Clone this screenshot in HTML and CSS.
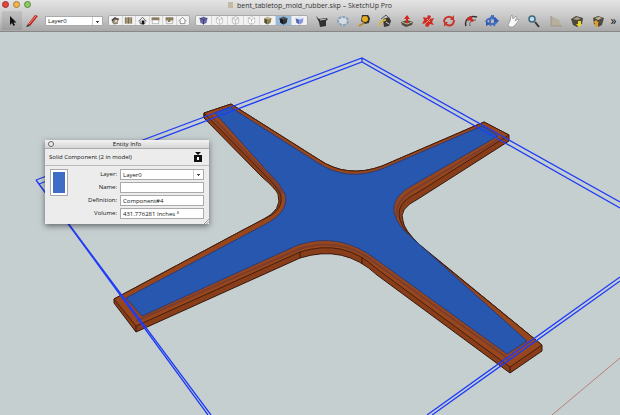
FILE: index.html
```
<!DOCTYPE html>
<html lang="en">
<head>
    <meta charset="UTF-8">
    <title>bent_tabletop_mold_rubber.skp – SketchUp Pro</title>
    <link rel="stylesheet" href="styles.css">
</head>
<body>
<header class="window-header">
    <div class="title-bar">
        <div class="window-buttons">
            <button class="light close" aria-label="Close"></button>
            <button class="light minimize" aria-label="Minimize"></button>
            <button class="light zoom" aria-label="Zoom"></button>
        </div>
        <h1><span class="file-icon"></span>bent_tabletop_mold_rubber.skp – SketchUp Pro</h1>
    </div>
    <div class="toolbar">
        <button class="tool selected" aria-label="Select"><svg viewBox="0 0 14 14"><path d="M5 2v9l2-2 1.500 3 1.500-1-1.500-2.500h3z" fill="#111"/></svg></button>
        <button class="tool" aria-label="Line"><svg viewBox="0 0 14 14"><path d="M3 10l7-9 3 1-8 10z" fill="#c3241c"/><path d="M4 10l7-8" stroke="#e88a80"/><path d="M1 13l2-3 2 2z" fill="#333"/></svg></button>
        <select class="layer-select" aria-label="Active layer"><option>Layer0</option></select>
        <div class="tool-group views">
            <button aria-label="Iso"><svg viewBox="0 0 14 14"><path d="M2 6l4-3 6 2-2 3v3l-5 1-2-2z" fill="#8b8272"/><path d="M2 6l4-3 6 2-3 1-3-1-3 3z" fill="#4b463e"/><path d="M6 7l3-1v3l-3 1z" fill="#e5dcc4"/></svg></button>
            <button aria-label="Top"><svg viewBox="0 0 14 14"><path d="M3 3h8v8H3z" fill="#a39476"/><path d="M7 3v8M3 3v8M11 3v8" stroke="#6d6048"/></svg></button>
            <button aria-label="Front"><svg viewBox="0 0 14 14"><path d="M2 8l5-5 5 5M4 7v4h6V7" fill="#eee" stroke="#444"/><path d="M6 7h3v5H6z" fill="#111"/></svg></button>
            <button aria-label="Right"><svg viewBox="0 0 14 14"><path d="M2 3h10v4H2z" fill="#8b7c60"/><path d="M3 7v4h8V7" fill="#fff" stroke="#aaa"/></svg></button>
            <button aria-label="Back"><svg viewBox="0 0 14 14"><path d="M2 3h10v4H8v2H5V7H2z" fill="#8b7c60"/><path d="M3 7v4h8V7" fill="none" stroke="#aaa"/></svg></button>
            <button aria-label="Left"><svg viewBox="0 0 14 14"><path d="M2 8l5-5 5 5M4 7v4h6V7" fill="#fff" stroke="#777"/></svg></button>
        </div>
        <div class="tool-group face-styles">
            <button aria-label="X-Ray"><svg viewBox="0 0 14 14"><path d="M2 4l5-2 5 2-1 6-4 2-4-2z" fill="#6b6ba7"/><path d="M2 4l5 2 5-2M7 6v6" fill="none" stroke="#34346c"/></svg></button>
            <button aria-label="Back Edges"><svg viewBox="0 0 14 14"><path d="M3 4l4-2 4 2v6l-4 2-4-2zl4 2 4-2M7 6v6" fill="#f5f5f5" stroke="#aaa" stroke-dasharray="2 1"/></svg></button>
            <button aria-label="Wireframe"><svg viewBox="0 0 14 14"><path d="M3 4l4-2 4 2v6l-4 2-4-2zl4 2 4-2M7 6v6" fill="none" stroke="#b5b5b5"/></svg></button>
            <button aria-label="Hidden Line"><svg viewBox="0 0 14 14"><path d="M3 4l4-2 4 2v6l-4 2-4-2zl4 2 4-2M7 6v6" fill="#fff" stroke="#aaa" stroke-dasharray="3 1"/></svg></button>
            <button aria-label="Shaded"><svg viewBox="0 0 14 14"><path d="M3 4l4-2 5 2-1 6-4 2-4-2z" fill="#c2b78b"/><path d="M3 4l4 2v6l-4-2z" fill="#55503e"/><path d="M7 6l5-2-1 6-4 2z" fill="#8f8150"/></svg></button>
            <button class="active" aria-label="Shaded With Textures"><svg viewBox="0 0 14 14"><path d="M2 4l5-2 5 2-1 6-4 2-4-2z" fill="#555"/><path d="M2 4l5 2v6l-4-2z" fill="#171b20"/><path d="M7 6l5-2-1 6-4 2z" fill="#2f353a"/></svg></button>
            <button aria-label="Monochrome"><svg viewBox="0 0 14 14"><path d="M2 4l5-2 5 2-1 6-4 2-4-2z" fill="#dfe4ff"/><path d="M2 4l5 2v6l-4-2z" fill="#5966b4"/><path d="M7 6l5-2-1 6-4 2z" fill="#8895dd"/></svg></button>
        </div>
        <div class="tools">
            <button class="tool" aria-label="Eraser"><svg viewBox="0 0 14 14"><path d="M1 2l3 3 7-1 2 1-2 2v5l-6 1-1-5z" fill="#303030"/><path d="M5 6l6-1" stroke="#ccc"/></svg></button>
            <button class="tool" aria-label="Circle"><svg viewBox="0 0 14 14"><ellipse cx="7" cy="7" rx="5" ry="4" fill="#d5dce2" stroke="#86a3bb" stroke-width="2" stroke-dasharray="3 1"/></svg></button>
            <button class="tool" aria-label="Tape Measure"><svg viewBox="0 0 14 14"><path d="M5 1h6l2 3-1 5-4 1-4-3z" fill="#37342e"/><circle cx="8" cy="5" r="3" fill="#e4ae20"/><path d="M7 9l-5 3" stroke="#b88a24" stroke-width="2"/></svg></button>
            <button class="tool" aria-label="Paint Bucket"><svg viewBox="0 0 14 14"><path d="M5 5l6-2 2 4-2 5-5 1z" fill="#3c3933"/><path d="M2 12c0-4 1-6 6-6" fill="none" stroke="#d8b538" stroke-width="2"/><path d="M3 5l5-4 3 3" fill="none" stroke="#555"/><path d="M8 8l3 2" stroke="#ddd"/></svg></button>
            <button class="tool" aria-label="Push/Pull"><svg viewBox="0 0 14 14"><path d="M1 8l6-2 6 2-1 3-6 2-4-2z" fill="#554b3e"/><path d="M2 8l5 2 5-2" fill="none" stroke="#c8b99b"/><path d="M7 1l3 4H8v4H6V5H4z" fill="#d8231d"/></svg></button>
            <button class="tool" aria-label="Move"><svg viewBox="0 0 14 14"><path d="M2 3l4 1 1-3 3 1-1 3 4-1-2 4 2 3-4-1-2 3-3-1 1-3-4 1 2-4z" fill="#cf2c24"/><path d="M6 5l3 3M9 5L5 9" stroke="#f1a29b"/></svg></button>
            <button class="tool" aria-label="Rotate"><svg viewBox="0 0 14 14"><path d="M2 8c0-5 6-7 9-3M12 6c0 6-6 7-9 3" fill="none" stroke="#c9342c" stroke-width="2"/><path d="M12 1v5H8zM2 13V8h4z" fill="#c9342c"/></svg></button>
            <button class="tool" aria-label="Offset"><svg viewBox="0 0 14 14"><path d="M2 12c-2-6 3-11 11-9" fill="none" stroke="#333" stroke-width="1.500"/><path d="M6 12c-1-4 1-6 6-6" fill="none" stroke="#555"/><path d="M3 4l5-2v2l2 3-2 1-3-2-1 2z" fill="#d12a22"/></svg></button>
            <button class="tool" aria-label="Orbit"><svg viewBox="0 0 14 14"><path d="M1 8c1-4 7-5 11-2M13 6c-1 4-7 5-11 3M6 2c4 0 5 6 3 10M9 2C5 2 4 8 6 12" fill="none" stroke="#456dc0" stroke-width="2"/><path d="M10 3l3 4-4 1zM1 7l4 3-4 2z" fill="#3157a8"/></svg></button>
            <button class="tool" aria-label="Pan"><svg viewBox="0 0 14 14"><path d="M2 11l2-4 1-5 1-1 1 4 3-3 1 1-2 4 3-2 1 1-3 4-3 3H4z" fill="#fafafa" stroke="#888" stroke-width=".7"/></svg></button>
            <button class="tool" aria-label="Zoom"><svg viewBox="0 0 14 14"><path d="M8 8l4 5" stroke="#363636" stroke-width="2"/><circle cx="5" cy="5" r="3" fill="#b8dfed" stroke="#40677d" stroke-width="1.500"/></svg></button>
            <button class="tool" aria-label="Zoom Extents"><svg viewBox="0 0 14 14"><path d="M2 2l8 4 3 6H2z" fill="#b6b09d"/><path d="M2 2v10h11" fill="none" stroke="#9a9588"/></svg></button>
            <button class="tool" aria-label="Get Models"><svg viewBox="0 0 14 14"><path d="M1 5l5-3 7 2-1 6-5 3-4-2z" fill="#4c493c"/><path d="M3 5l4-2 4 2-4 1z" fill="#aaa184"/><path d="M8 7h3v3h1l-3 3-3-3h2z" fill="#eed52c"/></svg></button>
            <button class="tool" aria-label="Share Model"><svg viewBox="0 0 14 14"><path d="M2 4l5-2 6 2-2 7-4 2-4-3z" fill="#504b40"/><path d="M4 4l4-1 3 1-4 2z" fill="#c8b98f"/><path d="M5 6l3 3H7v4H4V9H2z" fill="#dda02b"/></svg></button>
        </div>
        <button class="more" aria-label="More tools">»</button>
    </div>
</header>

<main class="workspace">
    <svg class="model" viewBox="0 32 620 383" preserveAspectRatio="xMidYMid slice">
        <path class="axis" d="M552 415L620 358"/>
        <!-- sides of the mold -->
        <path class="side" d="M204 113L231 104L318 159Q347 179 382 166L484 122L509 135V141L418 199Q398 209 403 221Q404 230 420 245L542 345V351L510 373L377 275Q344 244 300 258L136 332L114 303V299L243 230L262 220Q283 210 278 194Q275 188 262 177L204 118Z"/>
        <!-- top rim -->
        <path class="rim" d="M204 113L231 104L318 159Q347 179 382 166L484 122L509 135L417 193Q395 203 400 220Q403 230 418 244L542 345L510 367L377 269Q344 238 300 252L136 326L114 299L243 230L262 220Q286 210 280 193Q277 187 264 174Z"/>
        <path class="groove" d="M210 115L267 174Q280 187 282 194M136 321L299 249Q342 235 378 265L510 360M504 136L417 188Q394 200 397 217"/>
        <path class="rubber" d="M215 113L230 107L318 163Q347 182 382 169L482 126L498 136L415 184Q391 196 394 213Q398 226 410 236L527 341L507 354L377 260Q340 231 298 245L142 316L126 298L264 225Q290 212 285 194Q280 183 269 173Z"/>
        <path class="edge" d="M136 326V332M510 367V373M300 252V258M362 257V264M204 113V118"/>
        <path class="bounds" d="M36 180L362 58L620 202M39 184L362 62L620 208M36 180L208 415M39 184L211 415M362 58V62M36 180L39 184M620 277L427 415M620 281L432 415"/>
    </svg>

    <section class="entity-info">
        <div class="panel-title">
            <button class="panel-close" aria-label="Close panel"></button>
            <h2>Entity Info</h2>
        </div>
        <div class="panel-summary">
            <span>Solid Component (2 in model)</span>
            <button class="toggle" aria-label="Toggle details"><svg viewBox="0 0 8 10"><path d="M1 0h6L4 3z" fill="#111"/><path d="M0 3h8v7H0z" fill="#111"/><path d="M3 5h2v3H3z" fill="#fff"/></svg></button>
        </div>
        <div class="panel-body">
            <button class="swatch" aria-label="Material"><span></span></button>
            <form class="fields">
                <label for="layer">Layer:</label>
                <select id="layer"><option>Layer0</option></select>
                <label for="name">Name:</label>
                <input id="name" type="text">
                <label for="definition">Definition:</label>
                <input id="definition" type="text" value="Component#4">
                <label for="volume">Volume:</label>
                <input id="volume" type="text" value="431.776281 Inches ³" readonly>
            </form>
        </div>
        <svg class="grip" viewBox="0 0 6 6"><path d="M0 6L6 0M3 6L6 3" stroke="#888"/></svg>
    </section>
</main>
</body>
</html>
```
FILE: styles.css
```
* {
    box-sizing: border-box;
}

body {
    margin: 0;
    height: 100vh;
    display: flex;
    flex-direction: column;
    overflow: hidden;
    font-family: "Open Sans", "Noto Sans", sans-serif;
    font-size: 6px;
    color: #111;
}

button {
    padding: 0;
    border: none;
    background: none;
    font: inherit;
    color: inherit;
}

svg {
    display: block;
}

h1, h2 {
    margin: 0;
    font-weight: normal;
}

.window-header {
    background: linear-gradient(#e4e4e4, #cacaca 50%, #a9a9a9);
    border-bottom: 1px solid #888;
}

.title-bar {
    position: relative;
    height: 10px;
    display: flex;
    justify-content: center;
}

.title-bar h1 {
    font-size: 7px;
    line-height: 11px;
    color: #333;
}

.file-icon {
    display: inline-block;
    width: 5px;
    height: 6px;
    margin-right: 4px;
    background-color: #c5b8a4;
}

.window-buttons {
    position: absolute;
    left: 2px;
    top: 1px;
    display: flex;
    gap: 4px;
}

.light {
    width: 7px;
    height: 7px;
    border-radius: 50%;
    border: 1px solid #777;
}

.close {
    background-color: #e6453f;
    border-color: #98322f;
}

.minimize {
    background-color: #f0b64b;
    border-color: #a67a35;
}

.zoom {
    background-color: #8dcb61;
    border-color: #58883d;
}

.toolbar {
    display: flex;
    align-items: center;
    height: 21px;
    padding: 0 2px;
}

.tool svg {
    width: 14px;
    height: 14px;
    margin: 0 auto;
}

.toolbar > .tool {
    width: 20px;
    height: 19px;
    flex: none;
}

.toolbar > .selected {
    background-color: rgba(0, 0, 0, 0.08);
}

select, input {
    appearance: none;
    margin: 0;
    min-width: 0;
    height: 11px;
    padding: 0 2px;
    border: 1px solid #aaa;
    border-radius: 0;
    background-color: #fff;
    font: inherit;
    color: #111;
}

select {
    background-image: linear-gradient(#444, #444), linear-gradient(#444, #444), linear-gradient(#ccc, #ccc);
    background-size: 3px 1px, 1px 1px, 1px 100%;
    background-position: right 3px top 4px, right 4px top 5px, right 9px top 0;
    background-repeat: no-repeat;
}

.layer-select {
    flex: none;
    width: 58px;
    height: 10px;
    margin: 0 5px 0 3px;
}

.tool-group {
    flex: none;
    display: flex;
    height: 11px;
    background-color: #f2f2f2;
    border: 1px solid #aaa;
    border-radius: 2px;
}

.tool-group button {
    flex: 1;
    border-right: 1px solid #d5d5d5;
}

.tool-group button:last-child {
    border-right: none;
}

.tool-group svg {
    width: 11px;
    height: 11px;
    margin: -1px auto;
}

.tool-group .active {
    background-color: #95bbdd;
}

.views {
    width: 82px;
    margin-right: 5px;
}

.face-styles {
    width: 113px;
    margin-right: 3px;
}

.tools {
    flex: 1;
    display: flex;
}

.tools .tool {
    flex: 1;
}

.more {
    width: 9px;
    font-size: 12px;
    line-height: 14px;
}

.workspace {
    position: relative;
    flex: 1;
    min-height: 0;
    background-color: #c6cfd0;
}

.model {
    width: 100%;
    height: 100%;
}

.axis {
    stroke: #b77f7d;
}

.side {
    fill: #8a3d19;
    stroke: #34180d;
}

.rim {
    fill: #98461c;
    stroke: #442011;
}

.groove {
    fill: none;
    stroke: #7c3d2c;
    stroke-width: 2;
}

.rubber {
    fill: #2857af;
    stroke: #2a3c78;
}

.edge {
    fill: none;
    stroke: #34180d;
}

.bounds {
    fill: none;
    stroke: #1f3df5;
    stroke-width: 1.3;
}

.entity-info {
    position: absolute;
    left: 45px;
    top: 108px;
    width: 164px;
    background-color: #ececec;
    box-shadow: 0 2px 6px rgba(0, 0, 0, 0.5);
}

.panel-title {
    display: flex;
    align-items: center;
    height: 9px;
    padding: 0 3px;
    background: linear-gradient(#f2f2f2, #d5d5d5);
    border-bottom: 1px solid #aaa;
}

.panel-title h2 {
    flex: 1;
    padding-right: 6px;
    font-size: 6px;
    line-height: 8px;
    text-align: center;
}

.panel-close {
    width: 6px;
    height: 6px;
    border: 1px solid #666;
    border-radius: 50%;
    background-color: #eee;
}

.panel-summary {
    display: flex;
    align-items: center;
    justify-content: space-between;
    height: 17px;
    padding: 0 7px 0 4px;
    border-bottom: 1px solid #bbb;
}

.toggle svg {
    width: 8px;
    height: 10px;
}

.panel-body {
    display: flex;
    justify-content: space-between;
    padding: 3px 5px 5px;
}

.swatch {
    width: 18px;
    height: 27px;
    padding: 2px;
    border: 1px solid #aaa;
    background-color: #fff;
}

.swatch span {
    display: block;
    height: 100%;
    background-color: #3d6dc4;
}

.fields {
    display: grid;
    grid-template-columns: 35px 84px;
    column-gap: 3px;
    row-gap: 2px;
}

.fields label {
    text-align: right;
    line-height: 10px;
}

.grip {
    position: absolute;
    right: 0;
    bottom: 0;
    width: 5px;
    height: 5px;
}
```
